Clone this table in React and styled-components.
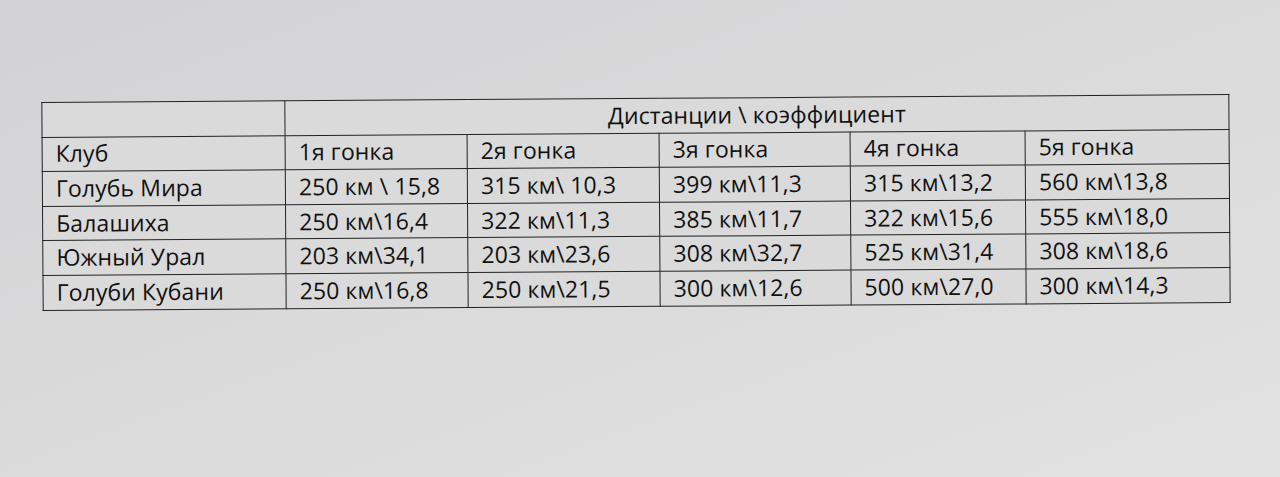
import React from 'react';
import styled, { createGlobalStyle } from 'styled-components';

//--------------------------------
//------------Styles--------------
//--------------------------------
const GlobalStyle = createGlobalStyle`
	html, body {
		margin: 0;
		padding: 0;
	}
	body {
		width: 1280px;
		height: 477px;
		overflow: hidden;
		background: linear-gradient(160deg, #d2d2d5 0%, #d9d9da 40%, #e2e2e2 100%);
		font-family: 'Open Sans', Lato, sans-serif;
	}
`;

const Screen = styled.div`
	width: 1280px;
	height: 477px;
	padding: 98px 0 0 42px;
	box-sizing: border-box;
`;

const Table = styled.table`
	border-collapse: collapse;
	width: 1187px;
	table-layout: fixed;
	transform: rotate(-0.38deg);
	transform-origin: 50% 50%;
	background: #dadada;
	color: #111;
	font-size: 23px;
	font-weight: 500;
	line-height: 1;
`;

const Row = styled.tr`
	height: 34.6px;
`;

const Cell = styled.td`
	border: 1.8px solid #222;
	padding: 0 0 2px ${props => (props.$wide ? 0 : 13)}px;
	text-align: ${props => (props.$wide ? 'center' : 'left')};
	vertical-align: middle;
	white-space: nowrap;
	letter-spacing: 0.1px;
	line-height: 24px;
`;

const widths = [243, 182, 192, 191, 175, 204];

const races = ['1я гонка', '2я гонка', '3я гонка', '4я гонка', '5я гонка'];

const rows = [
	['Голубь Мира', '250 км \\ 15,8', '315 км\\ 10,3', '399 км\\11,3', '315 км\\13,2', '560 км\\13,8'],
	['Балашиха', '250 км\\16,4', '322 км\\11,3', '385 км\\11,7', '322 км\\15,6', '555 км\\18,0'],
	['Южный Урал', '203 км\\34,1', '203 км\\23,6', '308 км\\32,7', '525 км\\31,4', '308 км\\18,6'],
	['Голуби Кубани', '250 км\\16,8', '250 км\\21,5', '300 км\\12,6', '500 км\\27,0', '300 км\\14,3'],
];

//--------------------------------
//--------Functionality-----------
//--------------------------------
const App = () => {
	return (
		<Screen>
			<GlobalStyle />
			<Table>
				<colgroup>
					{widths.map((w, i) => (
						<col key={i} style={{ width: w }} />
					))}
				</colgroup>
				<tbody>
					<Row>
						<Cell />
						<Cell colSpan={5} $wide>
							Дистанции \ коэффициент
						</Cell>
					</Row>
					<Row>
						<Cell>Клуб</Cell>
						{races.map(r => (
							<Cell key={r}>{r}</Cell>
						))}
					</Row>
					{rows.map(row => (
						<Row key={row[0]}>
							{row.map((c, i) => (
								<Cell key={i}>{c}</Cell>
							))}
						</Row>
					))}
				</tbody>
			</Table>
		</Screen>
	);
};

export default App;
